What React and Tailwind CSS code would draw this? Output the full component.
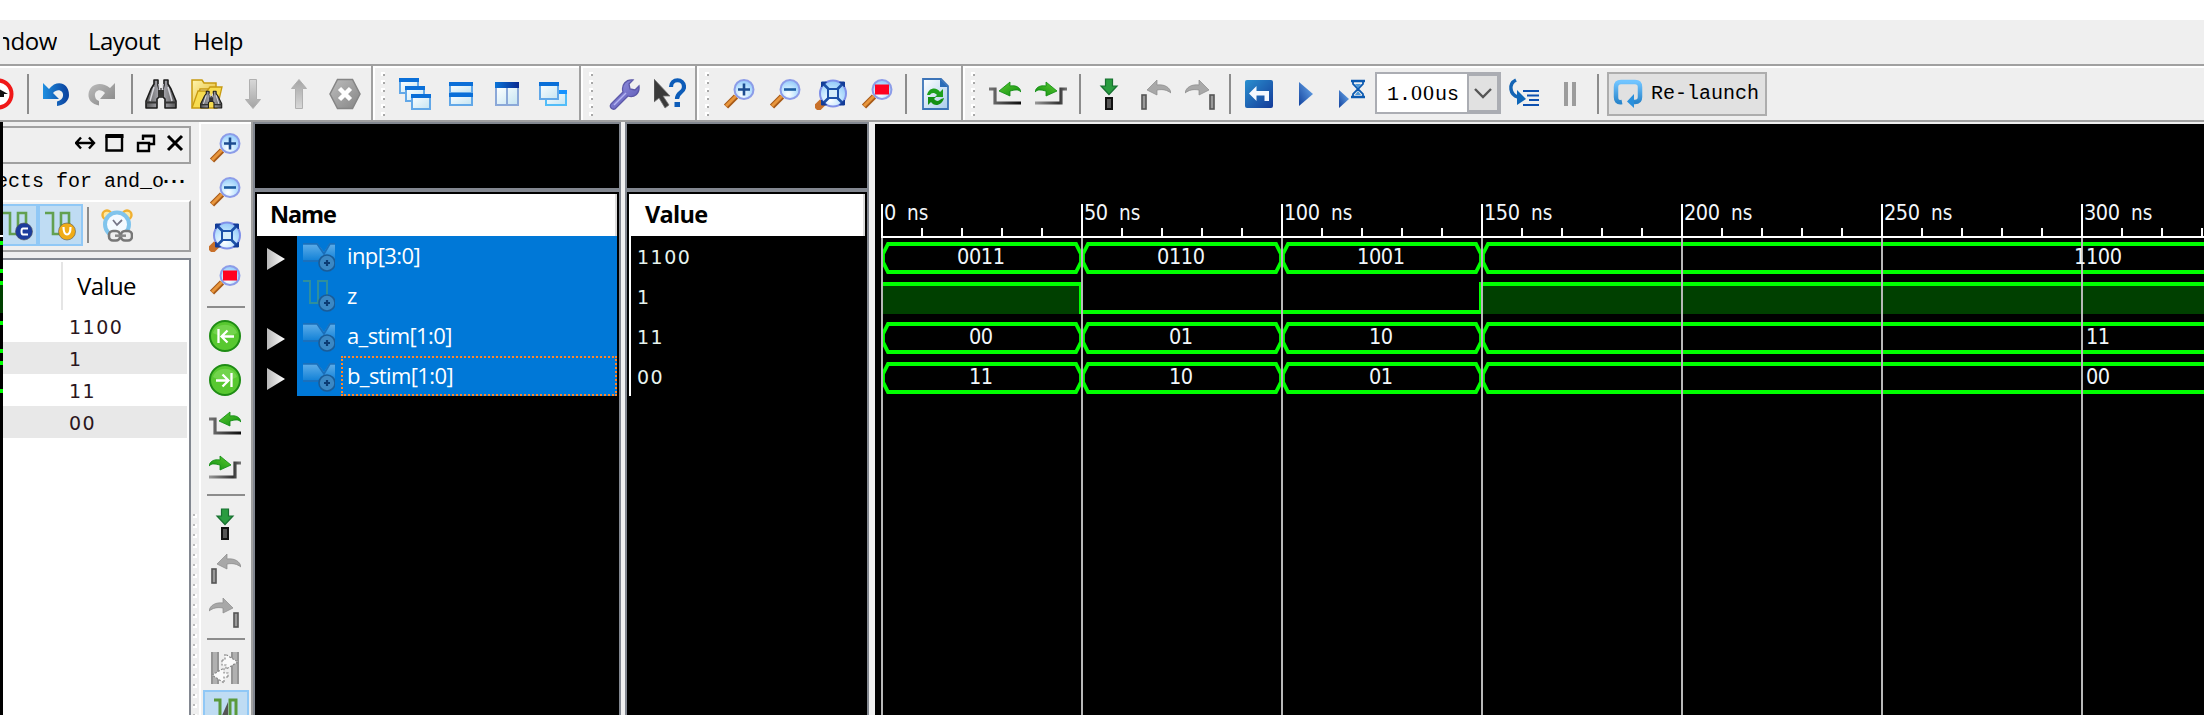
import React from "react";

/* ---------- icons (32 x 32 artboard) ---------- */

const Icon = ({ children, w = 32, h = 32, vb }) => (
  <svg width={w} height={h} viewBox={vb || `0 0 ${w} ${h}`} className="block shrink-0">
    {children}
  </svg>
);

const Defs = () => (
  <svg width="0" height="0" className="absolute">
    <defs>
      <linearGradient id="undoG" x1="0" x2="1"><stop offset="0" stopColor="#1f8fe0" /><stop offset="1" stopColor="#0a3f9c" /></linearGradient>
      <linearGradient id="grayV" x1="0" y1="0" x2="0" y2="1"><stop offset="0" stopColor="#d8d8d8" /><stop offset="1" stopColor="#a4a4a4" /></linearGradient>
      <linearGradient id="grayD" x1="0" y1="0" x2="1" y2="1"><stop offset="0" stopColor="#bdbdbd" /><stop offset="1" stopColor="#858585" /></linearGradient>
      <linearGradient id="binG" x1="0" x2="1"><stop offset="0" stopColor="#555" /><stop offset=".5" stopColor="#b4b4bc" /><stop offset="1" stopColor="#555" /></linearGradient>
      <linearGradient id="folderG" x1="0" y1="0" x2="1" y2="1"><stop offset="0" stopColor="#fff6ad" /><stop offset="1" stopColor="#e0b020" /></linearGradient>
      <linearGradient id="winG" x1="0" y1="0" x2="1" y2="1"><stop offset="0" stopColor="#ffffff" /><stop offset="1" stopColor="#c4e4f2" /></linearGradient>
      <linearGradient id="navyG" x1="0" x2="1"><stop offset="0" stopColor="#0a74d8" /><stop offset="1" stopColor="#0a2a90" /></linearGradient>
      <radialGradient id="lensG" cx=".4" cy=".75" r=".8"><stop offset="0" stopColor="#ffffff" /><stop offset=".5" stopColor="#c2e6ff" /><stop offset="1" stopColor="#8cc4f8" /></radialGradient>
      <linearGradient id="greenG" x1="0" y1="0" x2="1" y2="1"><stop offset="0" stopColor="#5ccc30" /><stop offset="1" stopColor="#0c8a10" /></linearGradient>
      <linearGradient id="darkH" x1="0" x2="1"><stop offset="0" stopColor="#777" /><stop offset="1" stopColor="#0c0c0c" /></linearGradient>
      <linearGradient id="darkH2" x1="0" x2="1"><stop offset="0" stopColor="#999" /><stop offset=".75" stopColor="#333" /><stop offset="1" stopColor="#777" /></linearGradient>
      <linearGradient id="blueBtn" x1="0" y1="0" x2="1" y2="1"><stop offset="0" stopColor="#2a90d0" /><stop offset="1" stopColor="#143a98" /></linearGradient>
      <linearGradient id="playG" x1="1" y1="0" x2="0" y2="1"><stop offset="0" stopColor="#70b0f0" /><stop offset="1" stopColor="#12429e" /></linearGradient>
      <linearGradient id="pageG" x1="0" y1="0" x2="1" y2="1"><stop offset="0" stopColor="#ffffff" /><stop offset="1" stopColor="#a9ccec" /></linearGradient>
      <linearGradient id="loopG" x1="0" y1="0" x2="0" y2="1"><stop offset="0" stopColor="#70c4ff" /><stop offset="1" stopColor="#2a86cc" /></linearGradient>
      <linearGradient id="triG" x1="0" x2="1"><stop offset="0" stopColor="#b8b8b8" /><stop offset="1" stopColor="#ffffff" /></linearGradient>
      <linearGradient id="wrenchG" x1="0" y1="0" x2="1" y2="1"><stop offset="0" stopColor="#9a9ae6" /><stop offset="1" stopColor="#5550b0" /></linearGradient>
      <linearGradient id="busG" x1="0" y1="0" x2="0" y2="1"><stop offset="0" stopColor="#62b0ea" /><stop offset="1" stopColor="#1583d8" /></linearGradient>
    </defs>
  </svg>
);

const Undo = () => (
  <Icon>
    <path d="M3 5v16h16l-6-6c4-5 11-3 10 3-.4 2.500-2 4.500-6 5.500v4.500c7-1 12-5 12-11C29 5 17 1 9 11z" fill="url(#undoG)" />
  </Icon>
);
const Redo = () => (
  <Icon>
    <path d="M29 5v16H14l5-6c-4-5-11-3-10 3 .4 2 1 4 4 5v4.500C6 26 2 22 2.500 16 3.500 5 16 3 24 10z" fill="url(#grayD)" />
  </Icon>
);
const BinocularsShape = () => (
  <g stroke="#1c1c1c" strokeWidth="1.600" strokeLinejoin="round">
    <path d="M9 2h4v5l1 4h4l1-4V2h4v4l3 5 5 12v7H20v-9l-2-2h-4l-2 2v9H1v-7l5-12 3-5z" fill="url(#binG)" />
    <path d="M1 24.500h11M20 24.500h11" stroke="#333" strokeWidth="2" />
    <path d="M14 6l1 9h2l1-9M9 9L5 23M23 9l4 14" fill="none" stroke="#d8d8de" strokeWidth="1.500" />
    <path d="M13 12h6v7h-6z" fill="#333" stroke="none" />
  </g>
);
const Binoculars = () => (<Icon><BinocularsShape /></Icon>);
const FolderFind = () => (
  <Icon>
    <path d="M1 2h10l2 3h12v6H9L5 29H1z" fill="url(#folderG)" stroke="#c79a10" strokeWidth="1.500" />
    <path d="M1 30L7 13h9l3-4h12l-5 21z" fill="#f7dc50" stroke="#c79a10" strokeWidth="1.300" />
    <g transform="translate(9 12) scale(.7 .6)"><BinocularsShape /></g>
  </Icon>
);
const ArrowV = ({ up }) => (
  <Icon>
    <g transform={up ? "rotate(180 16 16)" : undefined}>
      <path d="M12.500 1.500h7v20h4L16 30.500 8.500 21.500h4z" fill="url(#grayV)" stroke="#b0b0b0" strokeWidth="1" />
    </g>
  </Icon>
);
const HexClose = () => (
  <Icon>
    <path d="M8.500 1.500h15L31 16l-7.500 14.500h-15L1 16z" fill="url(#grayD)" stroke="#858585" strokeWidth="1.500" />
    <path d="M10.500 10.500l11 11M21.500 10.500l-11 11" stroke="#fff" strokeWidth="4.500" />
  </Icon>
);
const Win = ({ x, y, w, h, c = "#0a6fd8", b = "#62a8e8" }) => (
  <g>
    <rect x={x + 1} y={y + 1} width={w - 2} height={h - 2} fill="url(#winG)" stroke={b} strokeWidth="2" />
    <rect x={x} y={y} width={w} height="4" fill={c} />
  </g>
);
const Cascade = () => (
  <Icon>
    <Win x={0} y={0} w={20} h={16} />
    <Win x={6} y={8} w={20} h={16} />
    <Win x={12} y={16} w={20} h={16} />
  </Icon>
);
const TileH = () => (
  <Icon>
    <Win x={4} y={4} w={24} h={12} />
    <Win x={4} y={15} w={24} h={13} />
  </Icon>
);
const TileV = () => (
  <Icon>
    <path d="M5 9h11v18H5zM16 9h11v18H16z" fill="url(#winG)" stroke="#8ba8d8" strokeWidth="2" />
    <rect x="4" y="4" width="24" height="6" fill="url(#navyG)" />
  </Icon>
);
const WinsTwo = () => (
  <Icon>
    <Win x={8} y={12} w={22} h={16} c="#1492ff" b="#52bdf8" />
    <Win x={2} y={4} w={20} h={18} />
  </Icon>
);
const Wrench = () => (
  <Icon>
    <path d="M3 26L15 14C13 7 18 1 25 2l-4 4 1 5 5 1 4-4c1 8-5 12-11 10L7 31c-3 1-6-2-4-5z" fill="url(#wrenchG)" stroke="#5c58a8" strokeWidth="1.300" />
    <path d="M6 27L18 15" stroke="#b4b4f2" strokeWidth="1.500" />
  </Icon>
);
const WhatsThis = () => (
  <Icon>
    <path d="M0 1l16 17h-7l6 9-4 3-6-10-5 4z" fill="#3a3a3a" stroke="#777" strokeWidth=".8" />
    <path d="M17 9c0-9 13-9 13 0 0 6-7 5-7 12" fill="none" stroke="#0d5cb8" strokeWidth="4.200" />
    <rect x="20.500" y="24" width="5.500" height="5" fill="#0d5cb8" />
  </Icon>
);
const Lens = ({ children }) => (
  <Icon>
    <path d="M3 28.500L13 18.500" stroke="#a85a18" strokeWidth="6" />
    <path d="M3 28L13 18" stroke="#e8963c" strokeWidth="3" />
    <circle cx="21" cy="11.500" r="9.500" fill="url(#lensG)" stroke="#8c9ce8" strokeWidth="2" />
    {children}
  </Icon>
);
const ZoomIn = () => (<Lens><path d="M21 5.500v12M15 11.500h12" stroke="#1c4c90" strokeWidth="2.600" /></Lens>);
const ZoomOut = () => (<Lens><path d="M15 11.500h12" stroke="#1c5ca0" strokeWidth="2.600" /></Lens>);
const ZoomRed = () => (<Lens><rect x="14" y="6.500" width="14" height="10" fill="#ff0020" /></Lens>);
const ZoomFit = () => (
  <Icon>
    <path d="M1 31l7-7" stroke="#c8702a" strokeWidth="8" />
    <circle cx="18" cy="15.500" r="13" fill="url(#lensG)" stroke="#8090e8" strokeWidth="2" />
    <path d="M9 6.500l18 18M27 6.500l-18 18" stroke="#1c50a8" strokeWidth="2.600" />
    <path d="M6.500 9V4h5zM24.500 4h5v5zM29.500 22v5h-5zM11.500 27h-5v-5z" fill="#123c98" stroke="#123c98" strokeWidth="1" />
    <rect x="13" y="11" width="10" height="9" fill="#d6edfb" stroke="#1c50a8" strokeWidth="2" />
  </Icon>
);
const Refresh = () => (
  <Icon>
    <path d="M3 1h18l7 7v23H3z" fill="url(#pageG)" stroke="#3c74b8" strokeWidth="1.800" />
    <path d="M20 1l8 8h-8z" fill="#2a6cb8" />
    <path d="M7 17c2-8 10-8 13-3l3-3v8h-8l2-2c-3-3-6-2-7 0z" fill="#1ea01e" />
    <path d="M24 20c-2 8-10 9-13 4l-3 3v-8h8l-2 2c3 3 5 2 7 0z" fill="#149014" />
  </Icon>
);
const CurveL = "M10 13L21 4v4c6-1 10 1 11 6-3-3-6-2-11-1v5z";
const PrevEdge = () => (
  <Icon>
    <path d="M0 11h6v14h26" fill="none" stroke="url(#darkH)" strokeWidth="3.200" />
    <path d={CurveL} fill="url(#greenG)" stroke="#0c8a10" strokeWidth=".8" />
  </Icon>
);
const NextEdge = () => (
  <Icon>
    <path d="M32 11h-6v14H0" fill="none" stroke="url(#darkH2)" strokeWidth="3.200" />
    <path d={CurveL} transform="translate(32 0) scale(-1 1)" fill="url(#greenG)" stroke="#0c8a10" strokeWidth=".8" />
  </Icon>
);
const AddMarker = () => (
  <Icon>
    <path d="M12.500 1h7v7h4.500l-8 8.500-8-8.500h4.500z" fill="#2a9c40" stroke="#177030" strokeWidth="1.200" />
    <rect x="13" y="20" width="6" height="11" fill="#555" stroke="#111" strokeWidth="2" />
  </Icon>
);
const GrayL = "M8 12L18 2v5c7-1 13 2 14 8-4-3-8-4-14-3v5z";
const PrevMarker = () => (
  <Icon>
    <path d={GrayL} fill="#a8a8a8" stroke="#8a8a8a" strokeWidth=".7" />
    <rect x="3" y="17" width="4" height="14" fill="#999" stroke="#555" strokeWidth="1.600" />
  </Icon>
);
const NextMarker = () => (
  <Icon>
    <path d={GrayL} transform="translate(32 0) scale(-1 1)" fill="#a8a8a8" stroke="#8a8a8a" strokeWidth=".7" />
    <rect x="25" y="17" width="4" height="14" fill="#999" stroke="#555" strokeWidth="1.600" />
  </Icon>
);
const Restart = () => (
  <Icon>
    <rect x="2" y="2" width="28" height="28" rx="2" fill="url(#blueBtn)" />
    <path d="M6 15.500l7.500-7.500v5H26v10h-4.500v-5.500h-8v5.500z" fill="#f4f8ff" />
  </Icon>
);
const Play = () => (<Icon><path d="M10 4l14 12-14 12z" fill="url(#playG)" /></Icon>);
const PlayFor = () => (
  <Icon>
    <path d="M4 12l10 9-10 9z" fill="url(#playG)" />
    <path d="M16 3h14M16 19h14" stroke="#0c5ab0" strokeWidth="2.500" />
    <path d="M18 3v3l5 5-5 5v3M28 3v3l-5 5 5 5v3" fill="none" stroke="#0c5ab0" strokeWidth="1.800" />
    <path d="M20 6h6l-3 4zM20 17h6l-3-4z" fill="#4c98d8" />
  </Icon>
);
const StepInto = () => (
  <Icon>
    <path d="M8 2C0 6 2 17 10 19" fill="none" stroke="#1464b4" strokeWidth="3.500" />
    <path d="M9 12l9 9-9 6z" fill="#0e66b8" />
    <path d="M15 13h16M19 17.500h12M21 22h10M15 27h16" stroke="#0d50b0" strokeWidth="2.200" />
  </Icon>
);
const Pause = () => (<Icon><path d="M10 4h4v24h-4zM18 4h4v24h-4z" fill="#9c9c9c" /></Icon>);
const Loop = () => (
  <Icon w={30} h={32}>
    <path d="M9 24C4 25 3 22 3 19V9c0-4 2-5 5-5h14c3 0 5 1 5 5v10c0 3-1 5-5 5h-2" fill="none" stroke="url(#loopG)" strokeWidth="4.500" />
    <path d="M21 16v14l-7-6.500z" fill="#2a90dc" />
  </Icon>
);
const GreenDisc = ({ flip }) => (
  <Icon>
    <circle cx="16" cy="16" r="15" fill="#58c830" stroke="#1e8c14" strokeWidth="2" />
    <path d="M4 13c3-11 21-11 24 0-6 4-18 4-24 0z" fill="#8be068" opacity=".5" />
    <g transform={flip ? "translate(32 0) scale(-1 1)" : undefined}>
      <path d="M9.500 9v14M25 16.500H13M18.500 10.500l-6 6 6 6" fill="none" stroke="#fff" strokeWidth="2.300" />
    </g>
  </Icon>
);
const SwapGray = () => (
  <Icon>
    <path d="M2 0h8v32H2zM22 0h8v32h-8z" fill="#b0b0b0" />
    <path d="M3 0v32M9 0v32M29 0v32M23 0v32" stroke="#8a8a8a" strokeWidth="1.500" />
    <path d="M13 8h3V2l13 8-12 7v-4h-4zM19 25h-4v6L3 23l12-7v5h4z" fill="#fafafa" stroke="#888" strokeWidth="1.200" strokeDasharray="2 1.500" />
  </Icon>
);
const WaveCursor = () => (
  <Icon>
    <path d="M4 4h6v24h10V4h6v26" fill="none" stroke="#5a9a3c" strokeWidth="3" />
    <path d="M18 6v22l-8-4z" fill="#555" />
  </Icon>
);
const WaveBadge = ({ fill, letter }) => (
  <Icon>
    <path d="M0 4h8v21h8V4h8v14" fill="none" stroke="#62a050" strokeWidth="2.600" />
    <circle cx="22" cy="22.500" r="8.500" fill={fill} stroke="#555" strokeWidth=".6" />
    {letter === "C" ? (
      <path d="M26 19.500h-5c-2 0-2 6 0 6h5" fill="none" stroke="#fff" strokeWidth="2" />
    ) : (
      <path d="M18.500 18c0 10 7 10 7 0" fill="none" stroke="#fff" strokeWidth="2.200" />
    )}
  </Icon>
);
const AlarmLink = () => (
  <Icon w={32} h={34}>
    <circle cx="6" cy="6" r="4.500" fill="#ffe9a0" stroke="#f0b030" strokeWidth="2.400" />
    <circle cx="26" cy="6" r="4.500" fill="#ffe9a0" stroke="#f0b030" strokeWidth="2.400" />
    <circle cx="16" cy="15.500" r="12" fill="#f4faff" stroke="#80c4ec" strokeWidth="4" />
    <path d="M12 11l4 5 5-5" fill="none" stroke="#778" strokeWidth="1.800" />
    <rect x="8" y="21" width="23" height="12" rx="5" fill="#eee" />
    <rect x="8" y="22" width="11" height="9.500" rx="4" fill="none" stroke="#777" strokeWidth="2.600" />
    <rect x="20" y="22" width="11" height="9.500" rx="4" fill="none" stroke="#777" strokeWidth="2.600" />
    <path d="M14 26.700h11" stroke="#888" strokeWidth="2.500" />
  </Icon>
);
const StopRed = () => (
  <Icon>
    <circle cx="16" cy="16" r="13.500" fill="#fff" stroke="#f01818" strokeWidth="4" />
    <path d="M17 11l9 5h-4v3h-5z" fill="#111" />
  </Icon>
);
const SignalBadge = () => (
  <g>
    <circle cx="24" cy="20" r="8" fill="#3c88c4" stroke="#1a5c98" strokeWidth="1.600" />
    <path d="M24 17v6M21 20h6" stroke="#0c3c74" strokeWidth="2.200" />
  </g>
);
const BusIcon = () => (
  <Icon w={32} h={30}>
    <path d="M0 0h14l7 9 6-9h5v17H0z" fill="url(#busG)" />
    <path d="M0 .8h14l7 10 6-10h5M0 18h15" fill="none" stroke="#1a70bc" strokeWidth="1.800" />
    <SignalBadge />
  </Icon>
);
const BitIcon = () => (
  <Icon w={32} h={32}>
    <path d="M0 1h7v22h8V1h9v14" fill="none" stroke="#2f8f9c" strokeWidth="2" />
    <g transform="translate(0 3)"><SignalBadge /></g>
  </Icon>
);

/* ---------- toolbar pieces ---------- */

const Slot = ({ children }) => (
  <div className="flex w-[46px] shrink-0 items-center justify-center">{children}</div>
);
const VSep = ({ className }) => <div className={"h-10 w-0.5 shrink-0 bg-[#8c8c8c] " + className} />;
const GripBand = () => (
  <div className="flex h-full w-[22px] shrink-0">
    <div className="-mt-0.5 h-[calc(100%+2px)] w-0.5 bg-[#a0a0a0]" />
    <div className="h-full w-0.5 bg-white" />
    <div className="ml-1.5 flex flex-col gap-1 pt-1">
      {[0, 1, 2, 3, 4, 5].map((i) => (
        <div key={i} className="h-1 w-1 border-t-2 border-l-2 border-white bg-[#a8a8a8]" />
      ))}
    </div>
  </div>
);

const Toolbar = () => (
  <div className="flex h-[58px] items-center overflow-hidden border-t-2 border-b-2 border-[#a0a0a0] bg-[#efefef] pt-0.5 shadow-[inset_0_2px_0_#fff]">
    <div className="flex w-[27px] shrink-0"><div className="-ml-[18px]"><StopRed /></div></div>
    <VSep className="mr-1" />
    <Slot><Undo /></Slot>
    <Slot><Redo /></Slot>
    <VSep className="mr-[5px] ml-1.5" />
    <Slot><Binoculars /></Slot>
    <Slot><FolderFind /></Slot>
    <Slot><ArrowV /></Slot>
    <Slot><ArrowV up /></Slot>
    <Slot><HexClose /></Slot>
    <div className="w-[3px] shrink-0" />
    <GripBand />
    <div className="-ml-px flex shrink-0">
      <Slot><Cascade /></Slot>
      <Slot><TileH /></Slot>
      <Slot><TileV /></Slot>
      <Slot><WinsTwo /></Slot>
    </div>
    <div className="w-[3px] shrink-0" />
    <GripBand />
    <Slot><Wrench /></Slot>
    <Slot><WhatsThis /></Slot>
    <div className="w-0.5 shrink-0" />
    <GripBand />
    <div className="-ml-px flex shrink-0">
      <Slot><ZoomIn /></Slot>
      <Slot><ZoomOut /></Slot>
      <Slot><ZoomFit /></Slot>
      <Slot><ZoomRed /></Slot>
    </div>
    <VSep className="mr-1.5 ml-[5px]" />
    <Slot><Refresh /></Slot>
    <div className="w-0.5 shrink-0" />
    <GripBand />
    <div className="-ml-px flex shrink-0">
      <Slot><PrevEdge /></Slot>
      <Slot><NextEdge /></Slot>
    </div>
    <VSep className="mr-[5px] ml-[5px]" />
    <Slot><AddMarker /></Slot>
    <Slot><PrevMarker /></Slot>
    <Slot><NextMarker /></Slot>
    <VSep className="mr-[5px] ml-[5px]" />
    <Slot><Restart /></Slot>
    <Slot><Play /></Slot>
    <Slot><PlayFor /></Slot>
    <div className="-mt-0.5 ml-px flex h-[42px] w-[126px] shrink-0 items-center border-2 border-[#abadb3] bg-white">
      <div className="w-[90px] pl-2.5 font-['Liberation_Mono'] text-[20px] leading-none whitespace-nowrap text-black">
        1.<span className="font-['Liberation_Serif'] text-[22px] tracking-[1px]">00</span>us
      </div>
      <div className="flex h-full grow items-center justify-center border-2 border-[#abadb3] bg-[#e1e1e1]">
        <svg width="18" height="12" viewBox="0 0 18 12"><path d="M1 2l8 8 8-8" fill="none" stroke="#555" strokeWidth="2.400" /></svg>
      </div>
    </div>
    <Slot><StepInto /></Slot>
    <Slot><Pause /></Slot>
    <VSep className="mr-2 ml-1" />
    <div className="flex h-11 w-40 shrink-0 items-center border-2 border-[#adadad] bg-[#e1e1e1] pl-1">
      <Loop />
      <span className="ml-2 font-['Liberation_Mono'] text-[20px] whitespace-nowrap text-black">Re-launch</span>
    </div>
  </div>
);

const VIcon = ({ children }) => (
  <div className="flex h-11 shrink-0 items-center justify-center pr-0.5">{children}</div>
);
const HSep = ({ className }) => <div className={"h-0.5 w-[38px] shrink-0 self-center bg-[#8c8c8c] " + className} />;

const SideToolbar = () => (
  <div className="flex w-[52px] shrink-0 flex-col overflow-hidden border-t-2 border-l-2 border-white bg-[#efefef] pt-0.5">
    <VIcon><ZoomIn /></VIcon>
    <VIcon><ZoomOut /></VIcon>
    <VIcon><ZoomFit /></VIcon>
    <VIcon><ZoomRed /></VIcon>
    <HSep className="mt-1 mb-1.5" />
    <VIcon><GreenDisc /></VIcon>
    <VIcon><GreenDisc flip /></VIcon>
    <VIcon><PrevEdge /></VIcon>
    <VIcon><NextEdge /></VIcon>
    <HSep className="mt-1 mb-1.5" />
    <VIcon><AddMarker /></VIcon>
    <VIcon><PrevMarker /></VIcon>
    <VIcon><NextMarker /></VIcon>
    <HSep className="mt-1 mb-1.5" />
    <VIcon><SwapGray /></VIcon>
    <div className="flex h-11 w-[46px] shrink-0 justify-center self-center border-2 border-[#90c8f6] bg-[#bfdcf3] pt-1">
      <WaveCursor />
    </div>
  </div>
);

/* ---------- objects dock ---------- */

const objectValues = ["1100", "1", "11", "00"];

const ObjectsDock = () => (
  <div className="flex w-[188px] shrink-0 flex-col overflow-hidden bg-[#efefef]">
    <div className="mt-1 flex h-[38px] shrink-0 items-center justify-end border-2 border-l-0 border-[#a0a0a0] pb-1">
      <svg width="114" height="24" viewBox="0 0 114 24" fill="none" stroke="#000" strokeWidth="2.400">
        <path d="M2 12h16M6 6.500L1 12l5 5.500M14 6.500l5 5.500-5 5.500" />
        <path d="M31.500 5.500h15.500v14h-15.500zM31 5h17" />
        <path d="M30.500 5h18" strokeWidth="4" />
        <path d="M68 9V5h11v8h-4" />
        <path d="M63 12h11v8H63zM67 5h13M62 12h13" />
        <path d="M93 5l14 14M107 5L93 19" strokeWidth="3" />
      </svg>
    </div>
    <div className="-ml-[7px] flex h-9 shrink-0 items-center font-['Liberation_Mono'] text-[20px] whitespace-pre text-black">
      <span>ects for and_o</span><span className="-ml-1 font-bold tracking-[-4px]">···</span>
    </div>
    <div className="flex h-[52px] shrink-0 items-center border-t-2 border-r-2 border-b-2 border-t-white border-r-[#a0a0a0] border-b-[#a0a0a0]">
      <div className="-mt-0.5 flex h-[42px] w-[35px] items-center justify-end overflow-hidden border-2 border-l-0 border-[#90c8f6] bg-[#bfdcf3] pr-0.5"><WaveBadge fill="#1c3c9c" letter="C" /></div>
      <div className="-mt-0.5 flex h-[42px] w-[45px] items-center justify-center border-2 border-[#90c8f6] bg-[#bfdcf3]"><WaveBadge fill="#f0ac18" letter="U" /></div>
      <div className="-mt-0.5 mr-3 ml-1 h-9 w-0.5 bg-[#8c8c8c]" />
      <AlarmLink />
    </div>
    <div className="mt-1.5 flex grow flex-col border-t-2 border-r-2 border-[#828790] bg-white pr-0.5">
      <div className="flex h-[50px] shrink-0 pt-0.5">
        <div className="w-[58px] shrink-0" />
        <div className="h-12 w-0.5 bg-[#e5e5e5]" />
        <div className="pt-2 pl-[14px] font-['Open_Sans'] text-[24px] leading-[32px] tracking-[-0.600px] text-black">Value</div>
      </div>
      {objectValues.map((v, i) => (
        <div key={i} className={"flex h-8 shrink-0 items-center pt-0.5 pl-[66px] font-['DejaVu_Sans'] text-[19px] leading-none tracking-[1.500px] text-[#2a1620] " + (i % 2 ? "bg-[#e8e8e8]" : "bg-white")}>
          {v}
        </div>
      ))}
    </div>
  </div>
);

/* ---------- signal name / value columns ---------- */

const signals = [
  { name: "inp[3:0]", value: "1100", bus: true },
  { name: "z", value: "1", bus: false },
  { name: "a_stim[1:0]", value: "11", bus: true },
  { name: "b_stim[1:0]", value: "00", bus: true, focus: true },
];

const Head = ({ children, className }) => (
  <div className={"flex h-[42px] shrink-0 items-center border-r-2 border-[#dcdcdc] bg-white font-['Open_Sans'] text-[23.500px] font-bold text-black " + className}>
    {children}
  </div>
);

const NameColumn = () => (
  <div className="flex w-[368px] shrink-0 flex-col border-t-2 border-r-2 border-l-2 border-[#828790] bg-black">
    <div className="h-16 shrink-0" />
    <div className="h-1 shrink-0 bg-[#828790]" />
    <Head className="mx-0.5 mt-0.5 pl-[13px]"><span className="tracking-[-1.100px]">Name</span></Head>
    {signals.map((s) => (
      <div key={s.name} className="mx-0.5 flex h-10 shrink-0">
        <div className="flex w-10 items-center pt-1.5 pl-2.5">
          {s.bus && (
            <svg width="18" height="22" viewBox="0 0 18 22"><path d="M0 0l18 11L0 22z" fill="url(#triG)" /></svg>
          )}
        </div>
        <div className="flex grow bg-[#0078d7] pl-1.5">
          <div className={"w-[38px] shrink-0 " + (s.bus ? "pt-[7px]" : "pt-1")}>{s.bus ? <BusIcon /> : <BitIcon />}</div>
          <div className={"flex grow items-center border-2 pl-1 font-['Open_Sans'] text-[22px] leading-none tracking-[-0.600px] text-white " + (s.focus ? "border-dotted border-[#ff8728]" : "border-transparent")}>
            <span className="-mt-0.5">{s.name}</span>
          </div>
        </div>
      </div>
    ))}
  </div>
);

const ValueColumn = () => (
  <div className="flex w-[244px] shrink-0 flex-col border-t-2 border-r-2 border-l-2 border-[#828790] bg-black">
    <div className="h-16 shrink-0" />
    <div className="h-1 shrink-0 bg-[#828790]" />
    <Head className="mx-0.5 mt-0.5 pl-[16px]"><span className="tracking-[-0.700px]">Value</span></Head>
    {signals.map((s) => (
      <div key={s.name} className="ml-0.5 flex h-10 shrink-0 items-center border-l-2 border-white pt-0.5 pl-1.5 font-['DejaVu_Sans'] text-[19px] leading-none tracking-[1.500px] text-[#e6f4ee]">
        {s.value}
      </div>
    ))}
  </div>
);

/* ---------- waveform ---------- */

const PX_PER_NS = 4;
const ORIGIN = 7;
const tx = (ns) => ORIGIN + ns * PX_PER_NS;

const buses = [
  { y: 120, vals: ["0011", "0110", "1001", "1100"] },
  { y: 200, vals: ["00", "01", "10", "11"] },
  { y: 240, vals: ["11", "10", "01", "00"] },
];
const majors = [0, 50, 100, 150, 200, 250, 300];
const minors = Array.from({ length: 34 }, (_, i) => i * 10).filter((t) => t % 50);

const WaveText = ({ x, y, children, anchor = "start", len }) => (
  <text x={x} y={y} textAnchor={anchor} textLength={len} className="fill-[#f2f6fa] font-['DejaVu_Sans_Condensed','DejaVu_Sans'] text-[21.500px]" style={{ fontStretch: "condensed" }}>
    {children}
  </text>
);

const TickLabel = ({ t }) => {
  const num = String(t);
  const x = tx(t) + 2;
  return (
    <text y="96" className="fill-[#f2f6fa] font-['DejaVu_Sans_Condensed','DejaVu_Sans'] text-[21.500px]" style={{ fontStretch: "condensed" }}>
      <tspan x={x} textLength={num.length * 12}>{num}</tspan>{" "}
      <tspan x={x + (num.length + 1) * 12 - 1} fontSize="20.500">ns</tspan>
    </text>
  );
};

const Waveform = () => (
  <svg width="1329" height="591" viewBox="0 0 1329 591" className="mt-0.5 block shrink-0 bg-black">
    {buses.map((b) => (
      <g key={b.y}>
        {b.vals.map((v, i) => {
          const x0 = tx(i * 50);
          const x1 = i === 3 ? 1400 : tx(i * 50 + 50);
          return (
            <path
              key={i}
              d={`M${x0 + 1} ${b.y + 10}L${x0 + 6} ${b.y}H${x1 - 6}L${x1 - 1} ${b.y + 10}V${b.y + 18}L${x1 - 6} ${b.y + 28}H${x0 + 6}L${x0 + 1} ${b.y + 18}Z`}
              fill="none"
              stroke="#00ff00"
              strokeWidth="3.800"
            />
          );
        })}
      </g>
    ))}
    <rect x={tx(0)} y="160" width="199" height="30" fill="#004000" />
    <rect x={tx(150)} y="160" width="740" height="30" fill="#004000" />
    <path d={`M${tx(0)} 160H${tx(50) - 1}V188H${tx(150) - 1}V160H1400`} fill="none" stroke="#00ff00" strokeWidth="4" />
    {majors.map((t) => (
      <rect key={t} x={tx(t) - 1} y="114" width="2" height="480" fill="#b8b8b8" />
    ))}
    {majors.map((t) => (
      <rect key={t} x={tx(t) - 1} y="80" width="2" height="34" fill="#fff" />
    ))}
    {minors.map((t) => (
      <rect key={t} x={tx(t) - 1} y="104" width="2" height="8" fill="#fff" />
    ))}
    <rect x={ORIGIN - 1} y="112" width="1330" height="2" fill="#fff" />
    {majors.map((t) => (
      <TickLabel key={t} t={t} />
    ))}
    {buses.map((b) =>
      b.vals.map((v, i) => (
        <WaveText key={b.y + "-" + i} x={i === 3 ? 1223 : tx(i * 50 + 25) - 1} y={b.y + 20} anchor="middle" len={v.length * 12}>
          {v}
        </WaveText>
      ))
    )}
  </svg>
);

/* ---------- sliver of the neighbouring window ---------- */

const EdgeStrip = () => (
  <svg width="3" height="593" className="block shrink-0">
    <rect width="3" height="593" fill="#000" />
    <rect y="113" width="3" height="2" fill="#fff" />
    <rect y="159" width="3" height="32" fill="#004000" />
    {[119, 147, 159, 199, 227, 239, 267].map((y) => (
      <rect key={y} y={y} width="3" height="4" fill="#00ff00" />
    ))}
  </svg>
);

export default function App() {
  return (
    <div className="flex h-[715px] w-[2204px] flex-col overflow-hidden bg-white">
      <Defs />
      <div className="h-5 shrink-0 bg-white" />
      <div className="flex h-11 shrink-0 items-center bg-[#efefef] pb-0.5 font-['Open_Sans'] text-[24px] leading-none text-black">
        <div className="ml-[3px] flex w-[54px] justify-end overflow-hidden py-1"><span className="tracking-[-0.400px]">Window</span></div>
        <div className="w-[104px] pl-[31px] tracking-[-0.600px]">Layout</div>
        <div className="pl-8 tracking-[-0.500px]">Help</div>
      </div>
      <Toolbar />
      <div className="flex h-[593px] shrink-0 overflow-hidden bg-[#efefef]">
        <EdgeStrip />
        <ObjectsDock />
        <div className="flex w-2 shrink-0 flex-col gap-1.5 overflow-hidden pt-[392px] pl-0.5">
          {Array.from({ length: 21 }, (_, i) => (
            <div key={i} className="h-1 w-1 shrink-0 border-r-2 border-b-2 border-white bg-[#bcbcbc]" />
          ))}
        </div>
        <SideToolbar />
        <div className="w-0.5 shrink-0 bg-[#a0a0a0]" />
        <NameColumn />
        <div className="w-1 shrink-0 bg-[#f0f0f0]" />
        <ValueColumn />
        <div className="w-1.5 shrink-0 bg-[#f0f0f0]" />
        <Waveform />
      </div>
    </div>
  );
}
